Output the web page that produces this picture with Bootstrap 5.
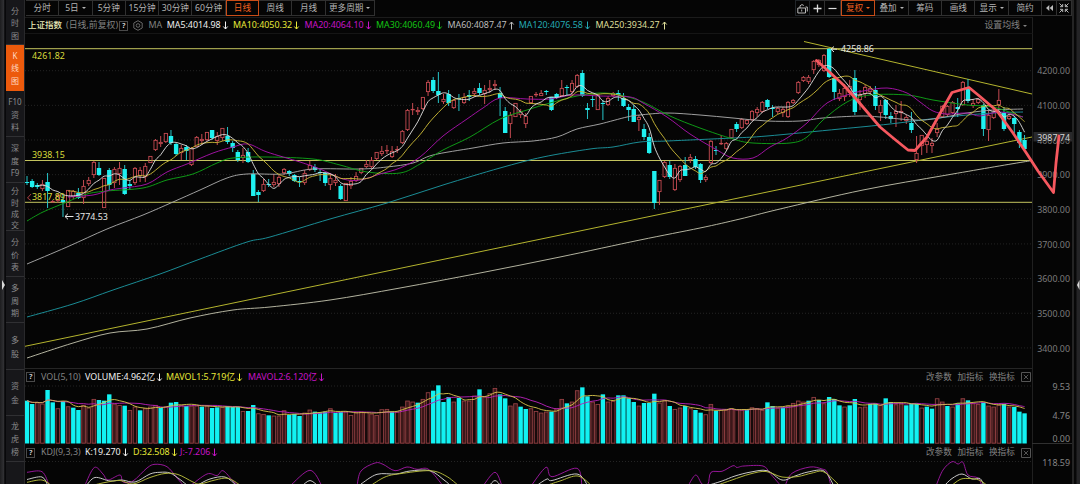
<!DOCTYPE html>
<html lang="zh-CN">
<head>
  <meta charset="UTF-8" />
  <meta name="viewport" content="width=device-width, initial-scale=1.0"/>
  <title>上证指数 - K线图</title>
  <link href="https://cdn.jsdelivr.net/npm/bootstrap@5.3.2/dist/css/bootstrap.min.css" rel="stylesheet" />
  <style>
    body {
      width: 1080px;
      height: 484px;
      background: #050505;
      color: #a2a2a2;
      font-family: "Noto Sans", "Noto Sans CJK SC", sans-serif;
      font-size: 8.9px;
      line-height: 1;
    }
    svg { display: block; overflow: visible; flex-shrink: 0; }
    .edge-left { width: 6px; background: linear-gradient(90deg, #1d1d1f, #303033 60%, #08080a 80%); }
    .edge-right { width: 8px; background: linear-gradient(90deg, #242424 0 2px, #070707 2px 4px, #242426 5px); }
    .side-menu { width: 19px; background: #17171a; border-right: 1px solid #29292b; }
    .side-menu div {
      flex: 0 0 46.1px;
      border-bottom: 1px solid #303033;
      color: #8a8a8c;
      font-size: 8px;
      line-height: 12.6px;
      text-align: center;
      display: flex;
      flex-direction: column;
      justify-content: center;
      padding-top: 2px;
    }
    .side-menu div:first-child { flex-basis: 45.2px; padding-top: 3px; }
    .side-menu .four { line-height: 11.2px; }
    .side-menu .two { line-height: 14.2px; }
    .side-menu .on { background: #ec5a0c; border-color: #ec5a0c; color: #ffd9c0; }
    .tools { height: 17px; padding-left: 1px; }
    .tools span {
      height: 16px;
      border: solid #303030;
      border-width: 1px 1px 1px 0;
      display: flex;
      flex-shrink: 0;
      align-items: center;
      justify-content: center;
      font-size: 8.6px;
      color: #b4b4b4;
      white-space: nowrap;
    }
    .periods span { width: 33.3px; }
    .periods span:last-child { width: 49px; }
    .tools .picked { border: 1px solid #c94d18; color: #f0601e; }
    .tools .w-adjust { width: 34.5px; }
    .w-tool { width: 33.4px; }
    .w-icon { width: 15.4px; }
    .w-end { width: 14.9px; }
    .caret {
      border: 2px solid transparent;
      border-top-color: currentColor;
      border-bottom: 0;
      margin-left: 3px;
    }
    .legend {
      height: 17px;
      width: 1008.5px;
      border-right: 1px solid #202020;
      display: grid;
      align-items: center;
      white-space: nowrap;
      padding-left: 3px;
    }
    .legend > * { display: flex; align-items: center; }
    .legend-ma { border-top: 1px solid #1b1b1b; grid-template-columns: 38px 53px 14.5px 15px 18.2px 66.3px 71.5px 71.5px 71.5px 71.2px 76.8px 1fr 48px; border-bottom: 1px solid #151515; }
    .legend-vol { border-top: 1px solid #252525; padding-left: 1px; grid-template-columns: 15px 44px 81px 82px 1fr 31.5px 31.5px 32.5px 11px; }
    .legend-kdj { padding-left: 1px; grid-template-columns: 15px 44px 48px 47px 1fr 31.5px 31.5px 32.5px 11px; }
    .arr { width: 5px; height: 9px; margin-left: 2px; }
    .line-icon { fill: none; stroke: #b8b8b8; stroke-width: 1; }
    .qbox {
      width: 9.5px;
      height: 10px;
      border: 1px solid #4a4a4a;
      color: #ddd;
      font-size: 7.5px;
      font-weight: 600;
      justify-content: center;
    }
    .dim { color: #828282; }
    .act { font-size: 8.6px; }
    .c-white { color: #f0f0f0; }
    .c-yellow { color: #e8e838; }
    .c-magenta { color: #c814c8; }
    .c-green { color: #14c414; }
    .c-gray { color: #bcbcbc; }
    .c-teal { color: #24aab4; }
    .c-cream { color: #dede9a; }
    svg text { font-size: 8.9px; }
  </style>
</head>
<body class="m-0 overflow-hidden">
  <div class="d-flex h-100">
    <div class="edge-left d-flex align-items-center">
      <svg width="6" height="10" viewBox="0 0 6 10"><path d="M2 43L5 48L2 53Z" fill="#d8d8d8"/></svg>
    </div>

    <nav class="side-menu d-flex flex-column overflow-hidden">
      <div>分<br>时<br>图</div>
      <div class="on">K<br>线<br>图</div>
      <div>F10<br>资<br>料</div>
      <div>深<br>度<br>F9</div>
      <div class="four">分<br>时<br>成<br>交</div>
      <div>分<br>价<br>表</div>
      <div>多<br>周<br>期</div>
      <div class="two">多<br>股</div>
      <div class="two">资<br>金</div>
      <div>龙<br>虎<br>榜</div>
    </nav>

    <main class="d-flex flex-column flex-grow-1 overflow-hidden">
      <div class="tools d-flex justify-content-between">
        <div class="periods d-flex">
          <span>分时</span><span>5日<i class="caret"></i></span><span>5分钟</span><span>15分钟</span><span>30分钟</span><span>60分钟</span><span class="picked">日线</span><span>周线</span><span>月线</span><span>更多周期<i class="caret"></i></span>
        </div>
        <div class="d-flex">
          <span class="w-icon border-start border-dark"><svg width="11" height="11" viewBox="0 0 11 11" class="line-icon"><path d="M.8 5H8.500V10H.8ZM3 5V2.800Q5 .5 6.800 2.500M8.500 4H10.300V8.500M4.700 6.500V8.500"/></svg></span>
          <span class="w-icon"><svg width="9" height="9" viewBox="0 0 9 9" stroke="#ddd" stroke-width="1.300"><path d="M4.500 .5V8.500M.5 4.500H8.500"/></svg></span>
          <span class="w-icon"><svg width="9" height="9" viewBox="0 0 9 9" stroke="#ddd" stroke-width="1.200"><path d="M.5 4.500H8.500"/></svg></span>
          <span class="picked w-adjust">复权<i class="caret"></i></span>
          <span class="w-tool">叠加<i class="caret"></i></span><span class="w-tool">筹码</span><span class="w-tool">画线</span><span class="w-tool">显示<i class="caret"></i></span><span class="w-tool">简约</span>
          <span class="w-end"><svg width="7" height="6" viewBox="0 0 7 6" fill="#bbb"><path d="M3.300 0V6L0 3ZM7 0V6L3.700 3Z"/></svg></span>
          <span class="w-end"><svg width="10" height="10" viewBox="0 0 10 10" class="line-icon"><path d="M.5 .5L3.500 3.500M9.500 .5L6.500 3.500M.5 9.500L3.500 6.500M9.500 9.500L6.500 6.500M1 3.700H3.700V1M9 3.700H6.300V1M1 6.300H3.700V9M9 6.300H6.300V9"/></svg></span>
        </div>
      </div>

      <div class="legend legend-ma">
        <span style="color:#eaeab8;font-size:8.500px;font-weight:500">上证指数</span>
        <span class="dim">(日线,前复权)</span>
        <span class="qbox">?</span>
        <span><svg width="10" height="11" viewBox="0 0 10 11" fill="none" stroke="#666"><path d="M5 .7L9.200 3V8L5 10.300L.8 8V3Z"/><circle cx="5" cy="5.500" r="1.800"/></svg></span>
        <span class="dim">MA</span>
        <span class="c-white" data-dir="down">MA5:4014.98</span>
        <span class="c-yellow" data-dir="down">MA10:4050.32</span>
        <span class="c-magenta" data-dir="down">MA20:4064.10</span>
        <span class="c-green" data-dir="down">MA30:4060.49</span>
        <span class="c-gray" data-dir="up">MA60:4087.47</span>
        <span class="c-teal" data-dir="down">MA120:4076.58</span>
        <span class="c-cream" data-dir="up">MA250:3934.27</span>
        <span class="dim">设置均线<i class="caret"></i></span>
      </div>
      <svg id="price" width="1048" height="334" viewBox="25 34 1048 334"></svg>

      <div class="legend legend-vol">
        <span class="qbox">?</span><span class="dim">VOL(5,10)</span>
        <span class="c-white" data-dir="down">VOLUME:4.962亿</span>
        <span class="c-yellow" data-dir="down">MAVOL1:5.719亿</span>
        <span class="c-magenta" data-dir="down">MAVOL2:6.120亿</span>
        <span class="dim act">改参数</span><span class="dim act">加指标</span><span class="dim act">换指标</span>
        <svg width="10" height="10" viewBox="0 0 10 10" fill="none" stroke="#555"><path d="M.5 .5H9.500V9.500H.5ZM2.800 2.800L7.200 7.200M7.200 2.800L2.800 7.200"/></svg>
      </div>
      <svg id="volume" width="1048" height="59" viewBox="25 385 1048 59"></svg>

      <div class="legend legend-kdj">
        <span class="qbox">?</span><span class="dim">KDJ(9,3,3)</span>
        <span class="c-white" data-dir="down">K:19.270</span>
        <span class="c-yellow" data-dir="down">D:32.508</span>
        <span class="c-magenta" data-dir="down">J:-7.206</span>
        <span class="dim act">改参数</span><span class="dim act">加指标</span><span class="dim act">换指标</span>
        <svg width="10" height="10" viewBox="0 0 10 10" fill="none" stroke="#555"><path d="M.5 .5H9.500V9.500H.5ZM2.800 2.800L7.200 7.200M7.200 2.800L2.800 7.200"/></svg>
      </div>
      <svg id="kdj" width="1048" height="23" viewBox="25 461 1048 23"></svg>
    </main>

    <div class="edge-right d-flex align-items-center"><svg width="8" height="12" viewBox="0 0 8 12"><path d="M7.500 44L5 49L7.500 54Z" fill="#d8d8d8"/></svg></div>
  </div>

<script src="https://cdn.jsdelivr.net/npm/bootstrap@5.3.2/dist/js/bootstrap.bundle.min.js"></script>
<script>
  const CYAN = "#1ff0f0";
  const RED = "#c64b52";
  const xAt = (i) => 27 + 5.142 * i;

  // up / down arrow after each value
  document.querySelectorAll("[data-dir]").forEach((el) => {
    const d = el.dataset.dir === "down" ? "M2.5 .5V8M.3 5.500L2.500 8L4.700 5.500" : "M2.5 8.500V1M.3 3.500L2.500 1L4.700 3.500";
    el.insertAdjacentHTML("beforeend", `<svg class="arr" viewBox="0 0 5 9"><path d="${d}" fill="none" stroke="currentColor"/></svg>`);
  });

  // kind, body top, body bottom, wick top, wick bottom
  const candles = `c182,183,176,185 c181,187,179,188 c185,187,183,189 r184,189,180,191 c182,191,173,208 r201,202,200,203 r195,201,194,203 c200,202,195,217 r190,207,190,207 r191,197,190,199
c193,198,188,199 r186,198,180,204 r180,184,177,186 r162,175,161,178 c168,175,162,176 r178,208,178,208 c170,185,168,190 r169,183,167,188 r168,174,162,185 c169,194,165,195
c184,186,180,190 r168,183,167,185 r170,176,167,182 r166,177,163,182 r156,163,156,163 r140,150,139,151 r142,144,136,147 r133,142,133,143 c136,143,130,145 c144,154,143,156
r148,153,145,160 c147,151,145,160 r148,165,147,166 r137,147,136,147 r139,141,134,145 r132,140,132,141 c130,138,130,140 r136,141,132,145 r128,138,128,141 c136,142,127,144
c143,148,141,152 c152,160,150,162 r155,158,148,163 c152,162,148,163 c174,196,170,196 c192,195,190,202 r184,191,179,192 c184,185,179,187 r182,185,174,187 r177,184,174,187
r169,173,168,175 c171,174,170,176 c175,181,174,182 c181,182,177,187 r173,183,170,185 r165,170,161,171 c167,170,164,172 c172,173,169,181 c173,183,172,186 r178,185,173,190
r180,183,174,186 c186,199,184,200 r183,201,183,201 r181,186,177,189 r176,181,172,182 r168,173,168,174 r164,167,160,168 r160,167,157,169 r152,159,152,160 r151,154,146,156
r150,151,145,154 r151,157,146,158 r149,150,146,153 r131,143,130,144 r110,130,109,131 r109,110,103,115 r110,112,107,115 r97,109,97,110 r82,92,80,96 c80,91,77,93
c91,95,72,103 r99,102,94,104 c94,103,90,106 r100,108,99,109 c98,99,94,111 r97,103,93,104 c95,97,90,101 r91,94,88,97 c88,93,83,95 r90,94,85,104
r88,90,80,93 r84,86,80,90 c93,98,87,116 c111,133,107,133 r115,124,112,138 r103,117,103,117 r111,115,109,118 r116,124,113,128 r96,103,96,104 r94,95,92,97
r93,96,90,96 c91,92,90,95 c97,110,97,111 c94,98,93,99 r88,96,80,97 c87,88,85,95 r83,92,80,95 r75,87,74,88 c73,96,70,97 c108,110,103,119
c99,100,95,107 r95,110,94,110 c103,104,100,120 r98,105,96,106 r93,96,92,97 c93,95,90,101 c98,106,93,107 c107,110,104,121 c109,122,105,122 r117,120,115,131
c129,137,124,140 c137,153,133,154 c171,203,171,209 r180,192,180,205 r162,177,161,178 c165,177,161,179 r168,190,164,191 r166,180,165,182 c165,176,157,176 r157,160,154,163
c159,167,156,169 c164,180,163,183 r177,180,175,182 r141,163,140,164 c150,151,146,155 r143,144,135,145 r143,149,142,150 r129,138,129,139 c124,129,122,132 r119,128,118,129
r120,124,119,125 r111,120,110,121 r109,113,107,117 r102,112,101,113 c100,107,99,109 c108,109,105,117 r108,112,107,114 r109,113,107,117 r102,117,101,118 r100,103,99,104
r82,93,81,94 r77,81,76,82 r77,82,75,84 r61,70,60,74 r60,65,59,67 r55,71,54,72 c49,77,48,78 c78,92,75,100 r93,99,89,101 r88,97,84,101
r86,93,80,97 c78,112,70,115 r95,100,90,110 r87,94,85,98 r88,92,86,95 c90,106,86,110 r105,113,100,121 c100,115,99,119 c116,119,112,123 r111,114,105,127
r111,113,101,121 r117,121,115,124 c123,130,112,133 r153,160,136,163 r135,146,135,155 r141,145,138,153 r143,146,138,153 r129,133,123,137 r106,117,105,118 r106,115,105,116
r102,113,101,114 c107,109,98,117 r82,105,81,106 c87,101,79,103 r103,106,99,108 r99,103,98,104 c105,129,104,136 r115,130,110,141 r112,118,110,119 r100,105,89,112
c113,129,107,131 r116,119,115,120 c118,124,116,133 c132,143,130,148 c140,149,135,150`
    .split(/\s+/).map((s) => [s[0], ...s.slice(1).split(",").map(Number)]);

  // bar tops, in thirds of a pixel under y = 355
  const volumes = `c137 c147 r142 r146 c105 c142 r160 c138 r154 c158 c165 r150 r158 r132 c135 c137 c118 r146 r150 c152 r165 r155 c166 r160 r155 r150 c159 r155 c143 c141 r150 c153 r152 r152 c155 r152 c159 c157 r156 c153
c156 c156 r168 c168 c150 r175 r177 c181 r182 r182 r166 c180 c177 c183 r173 r164 c170 c172 c170 r160 c174 c171 r170 r180 r172 r170 r172 r176 r180 r163 r162 c170 r170 r155 r137 r140 c143 r132 r112 c107
c91 c141 c126 r140 c129 r137 r137 r122 c103 r125 r115 r99 c118 c130 r152 r145 c155 c162 r160 r168 r173 r170 c170 r160 r132 c145 r140 r106 c97 c124 r140 r147 c118 r140 r138 c121 c121 c130 c141 r152
c144 c144 c116 r143 r137 c153 r162 r158 c153 r160 c165 c173 r178 r147 c167 r165 r165 r160 r163 r165 c165 r157 r160 r165 c142 c153 r158 c157 r152 r144 r137 r140 c137 r126 c135 r145 c126 c132 c151 r155
c151 c132 r157 r155 c146 c146 r150 c130 c141 r148 r146 c151 c146 c146 r158 c155 c161 r130 r140 c153 r155 c145 r130 c136 r145 r147 c142 r152 r155 r150 c147 r155 c156 c170 c175`
    .split(/\s+/).map((s) => [s[0], 355 + s.slice(1) / 3]);

  const rect = (x, y, w, h, fill, stroke) =>
    `<rect x="${x}" y="${y}" width="${w}" height="${h}" fill="${fill}"${stroke ? ` stroke="${stroke}" stroke-width=".9"` : ""}/>`;
  const line = (x1, y1, x2, y2, color, extra = "") =>
    `<line x1="${x1}" y1="${y1}" x2="${x2}" y2="${y2}" stroke="${color}" ${extra}/>`;
  const label = (x, y, text, color, extra = "") =>
    `<text x="${x}" y="${y}" fill="${color}" ${extra}>${text}</text>`;

  // smooth path through the points
  function curve(pts, color, width = 0.95) {
    let d = `M${pts[0]}`;
    for (let i = 0; i < pts.length - 1; i++) {
      const a = pts[i - 1] || pts[i], b = pts[i], c = pts[i + 1], e = pts[i + 2] || c;
      d += `C${b[0] + (c[0] - a[0]) / 6},${b[1] + (c[1] - a[1]) / 6} ${c[0] - (e[0] - b[0]) / 6},${c[1] - (e[1] - b[1]) / 6} ${c}`;
    }
    return `<path d="${d}" fill="none" stroke="${color}" stroke-width="${width}"/>`;
  }
  function parse(text) {
    return text.trim().split(/\s+/).map((p) => p.split(",").map(Number));
  }
  function average(values, n, from) {
    const out = [];
    for (let i = from; i < values.length; i++) {
      const part = values.slice(Math.max(0, i - n + 1), i + 1);
      out.push([xAt(i), part.reduce((a, b) => a + b, 0) / part.length]);
    }
    return out;
  }

  // ---- price panel ----
  let g = "";
  for (let k = 0; k < 9; k++) {
    const y = 70.7 + k * 34.65;
    g += line(25, y, 1032, y, "#242424", 'stroke-dasharray="1 2"');
    g += label(1070, y + 3.6, (4200 - k * 100) + ".00", "#7c7c7c", 'text-anchor="end"');
  }
  g += line(1032.5, 34, 1032.5, 368, "#202020");
  [48.7, 160.5, 202.3].forEach((y) => { g += line(25, y, 1032, y, "#c4c45e"); });
  g += line(25, 346.3, 1032, 137, "#b4b42e");
  g += line(804, 41.500, 1032, 94, "#b4b42e");

  candles.forEach(([kind, top, bottom, high, low], i) => {
    const x = xAt(i), h = Math.max(bottom - top, 1);
    if (kind === "c") {
      g += line(x, high, x, low, "#27c6ca") + rect(x - 2.2, top, 4.4, h, CYAN);
    } else {
      g += line(x, high, x, top, RED) + line(x, bottom, x, low, RED);
      g += rect(x - 1.6, top + .4, 3.2, Math.max(h - .8, .4), "none", RED);
    }
  });

  g += curve(parse(`27,358 73,343 110,333 147,329 190,318 233,310 270,307 330,300 400,288 480,273 560,257 640,240 700,228 740,219 780,209 863,190 947,175 1023,162 1032,161`), "#bcbca6");
  g += curve(parse(`27,317 73,304 113,290 160,274 200,259 247,242 270,237 330,219 387,203 443,185 500,168 543,157 590,149 613,147 640,142 667,141 733,138 767,136 840,129 890,124 947,117 993,113 1023,112`), "#1b929c");
  g += curve(parse(`27,264 67,247 107,229 143,215 173,202 200,190 227,178 247,174 283,174 313,169 360,169 387,167 413,163 433,155 473,148 503,143 533,141 557,137 577,129 600,124 627,117 640,115 667,113 700,115 733,118 767,121 800,121 823,118 860,116 880,117 913,120 933,119 967,113 993,110 1023,109`), "#a6a6a6");
  g += curve(parse(`27,221 43,212 67,202 87,194 107,191 143,188 167,180 193,174 217,163 233,158 267,157 313,159 340,165 367,172 400,173 420,164 443,150 470,137 500,119 527,110 550,103 577,96 600,93 620,95 643,102 670,116 700,128 733,139 753,143 790,143 807,137 823,120 847,102 870,95 907,95 933,100 967,105 993,107 1023,117`), "#0fa017");
  g += curve(parse(`68,197 93,195 110,190 123,188 147,184 167,172 187,164 213,153 233,147 248,144 267,152 300,162 320,169 343,179 360,180 380,174 400,168 420,157 443,136 467,119 483,108 500,98 527,99 550,99 573,95 600,96 630,97 643,103 667,117 690,134 717,150 733,158 753,158 770,147 787,138 807,123 827,103 850,94 863,91 887,88 907,93 920,102 933,111 947,114 967,113 980,116 1000,112 1023,117`), "#a412a8");
  const closes = candles.map((c) => (c[0] === "r" ? c[1] : c[2]));
  g += curve(average(closes, 10, 8), "#c6b536");
  g += curve(average(closes, 5, 2), "#d8d8d8");

  g += label(32, 59.3, "4261.82", "#d9dc3c") + label(32, 158, "3938.15", "#d9dc3c") + label(32, 200, "3817.89", "#d9dc3c");
  g += label(75, 219.8, "3774.53", "#e6e6e6") + label(841, 52.3, "4258.86", "#e6e6e6");
  g += `<path d="M65 216.500H73.500M68 213.700L65 216.500L68 219.300M831 49.200H837M834 46.500L831 49.200L834 52" fill="none" stroke="#e6e6e6"/>`;
  g += `<path d="M31 194L27.500 198L31 200.500" fill="none" stroke="#b9444b" stroke-width=".9"/>`;
  g += rect(1033.500, 132, 38.500, 9.500, "#29292b") + label(1070, 140.600, "3987.74", "#d4d4d4", 'text-anchor="end"');

  // hand drawn trend
  g += `<path d="M816.500 60.500L830 72.500L843.500 85L857 100L880 127L895 139.500L908 150L915 150.500L927 137L940 113.500L952 92.500L969 87.500L980 96.500L997 111L1013 133L1027 154L1038 171L1053.500 192.500L1056 163L1059 136" fill="none" stroke="#f6585f" stroke-width="2.800" stroke-linejoin="round" stroke-linecap="round"/>`;
  document.getElementById("price").innerHTML = g;

  // ---- volume panel ----
  g = line(25, 386, 1032, 386, "#242424", 'stroke-dasharray="1 2"');
  volumes.forEach(([kind, top], i) => {
    const x = xAt(i);
    g += kind === "c"
      ? rect(x - 2.2, top, 4.4, 443.5 - top, "#12f2f2")
      : rect(x - 1.8, top + .4, 3.6, 442.8 - top, i % 3 ? "#3b1719" : "#170a0b", "#944043");
  });
  const tops = volumes.map((v) => v[1]);
  g += curve(average(tops, 10, 0), "#b421b6") + curve(average(tops, 5, 0), "#d0be4a");
  g += line(1032.5, 385, 1032.5, 444, "#202020") + line(1032, 443.5, 1072, 443.5, "#303030");
  g += label(1070, 390, "9.53", "#858585", 'text-anchor="end"') + label(1070, 418.700, "4.76", "#858585", 'text-anchor="end"') + label(1070, 442, "0.00", "#858585", 'text-anchor="end"');
  document.getElementById("volume").innerHTML = g;

  // ---- kdj panel ----
  const J = [
    "27,472.3 42,471.700 49,485", "85,485 94.300,467.500 103,474 108,480 120,475 123,482 133,481 147,468 155,464.300 167,466.700 177,478 184,486",
    "190,486 207,474 217,475.500 223,470.700 233,481 239,486", "290,486 310,470.300 322,486",
    "357,486 361,471 375,463 383,464.300 395,470.700 407,467 417,469.300 428,469 440,482 442,486", "483,486 495,472.300 502,486",
    "531,486 546,467.300 552,476.700 577,468.300 582,486", "688,486 695.700,475 702,484 708,484 711,472.300 722,471.300 733,465.700 737,467.500 744,466 763,466 770,473.300 781,486", "785,486 792,473.300 810,467 822,469 827,472 831,486",
    "936,486 943,470 952,461.700 958,464 963,462.300 968,475 978,478 982,486"
  ];
  const K = [
    "27,479.500 42,477 48,486", "86,486 95,477.500 110,481 122,480 135,482 150,474 160,472.300 170,473 180,479.500 188,486",
    "196,486 210,479 225,477 236,485", "302,486 310,480.500 318,486", "361,484 377,474.300 396,474 410,471 430,470.700 444,480 451,486",
    "489,486 495,480.500 501,486", "536,486 547,479 552,480.500 577,474 588,486", "706,486 722,481 735,476 751,472 767,470.700 782,480 795,476 808,472 824,471 834,486",
    "944,486 952,478.500 962,474 972,479 980,478.500 984,486"
  ];
  const D = [
    "27,482.300 42,480 52,486", "90,486 105,482.500 120,480.500 133,484 150,477.500 165,473.500 178,474.500 193,482 200,484 215,480 228,478.300 240,485",
    "370,486 385,477 400,473.700 430,470.700 446,476 459,486", "545,486 560,481 578,476 592,486",
    "715,486 732,480 750,474 766,471.500 782,477 798,476.500 812,473 824,472 840,486", "951,486 960,479.500 968,478.500 979,480 988,486"
  ];
  g = line(25, 461.5, 1032, 461.5, "#242424", 'stroke-dasharray="1 2"');
  J.forEach((s) => { g += curve(parse(s), "#9c179f"); });
  K.forEach((s) => { g += curve(parse(s), "#d2d2d2"); });
  D.forEach((s) => { g += curve(parse(s), "#b6ba3c"); });
  g += line(1032.5, 461, 1032.5, 484, "#202020") + label(1070, 465.500, "118.59", "#858585", 'text-anchor="end"');
  document.getElementById("kdj").innerHTML = g;
</script>
</body>
</html>
